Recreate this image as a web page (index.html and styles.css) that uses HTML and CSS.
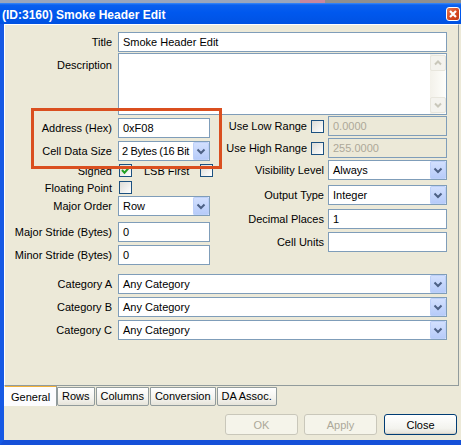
FILE: index.html
```html
<!DOCTYPE html>
<html>
<head>
<meta charset="utf-8">
<link rel="stylesheet" href="styles.css">
</head>
<body>
<div class="topstrip"><span class="strip-a"></span><span class="strip-pink"></span><span class="strip-b"></span></div>
<div class="titlebar">
  <span class="title">(ID:3160) Smoke Header Edit</span>
  <span class="close"><svg width="12" height="12" viewBox="0 0 12 12"><path d="M3 3 L9 9 M9 3 L3 9" stroke="#fff" stroke-width="2.2" fill="none"/></svg></span>
</div>
<div class="frame">
  <div class="panel">
    <div class="row">
      <span class="lbl">Title</span>
      <div class="input">Smoke Header Edit</div>
    </div>
    <div class="row row-desc">
      <span class="lbl lbl-top">Description</span>
      <div class="textarea">
        <div class="ta-text"></div>
        <div class="vscroll">
          <div class="sbtn"><svg width="14" height="14" viewBox="0 0 14 14"><path d="M4 8.5 L7 5.5 L10 8.5" stroke="#C9C7BA" stroke-width="2" fill="none"/></svg></div>
          <div class="strack"></div>
          <div class="sbtn"><svg width="14" height="14" viewBox="0 0 14 14"><path d="M4 5.5 L7 8.5 L10 5.5" stroke="#C9C7BA" stroke-width="2" fill="none"/></svg></div>
        </div>
      </div>
    </div>

    <div class="mid">
      <div class="col-left">
        <div class="lrow m-addr">
          <span class="lbl">Address (Hex)</span>
          <div class="input">0xF08</div>
        </div>
        <div class="lrow m-cell">
          <span class="lbl">Cell Data Size</span>
          <div class="select"><span class="val val-tight">2 Bytes (16 Bit</span><span class="dd"><svg width="16" height="18" viewBox="0 0 16 18"><path d="M4.5 7.5 L8 11 L11.5 7.5" fill="none" stroke="#4D6185" stroke-width="2"/></svg></span></div>
        </div>
        <div class="lrow crow m-signed">
          <span class="lbl">Signed</span>
          <div class="checks">
            <span class="cb"><svg width="11" height="11" viewBox="0 0 11 11"><path d="M2 5 L4.5 7.8 L9 2.5" stroke="#21A121" stroke-width="2" fill="none"/></svg></span>
            <span class="cb-lbl">LSB First</span>
            <span class="cb"></span>
          </div>
        </div>
        <div class="lrow crow m-float">
          <span class="lbl">Floating Point</span>
          <div class="checks"><span class="cb"></span></div>
        </div>
        <div class="lrow m-order">
          <span class="lbl">Major Order</span>
          <div class="select"><span class="val">Row</span><span class="dd"><svg width="16" height="18" viewBox="0 0 16 18"><path d="M4.5 7.5 L8 11 L11.5 7.5" fill="none" stroke="#4D6185" stroke-width="2"/></svg></span></div>
        </div>
        <div class="lrow m-major">
          <span class="lbl">Major Stride (Bytes)</span>
          <div class="input">0</div>
        </div>
        <div class="lrow m-minor">
          <span class="lbl">Minor Stride (Bytes)</span>
          <div class="input">0</div>
        </div>
      </div>

      <div class="col-right">
        <div class="rrow m-low">
          <span class="lbl lbl-cb">Use Low Range <span class="cb"></span></span>
          <div class="input disabled">0.0000</div>
        </div>
        <div class="rrow m-high">
          <span class="lbl lbl-cb">Use High Range <span class="cb"></span></span>
          <div class="input disabled">255.0000</div>
        </div>
        <div class="rrow m-vis">
          <span class="lbl">Visibility Level</span>
          <div class="select"><span class="val">Always</span><span class="dd"><svg width="16" height="18" viewBox="0 0 16 18"><path d="M4.5 7.5 L8 11 L11.5 7.5" fill="none" stroke="#4D6185" stroke-width="2"/></svg></span></div>
        </div>
        <div class="rrow m-out">
          <span class="lbl">Output Type</span>
          <div class="select"><span class="val">Integer</span><span class="dd"><svg width="16" height="18" viewBox="0 0 16 18"><path d="M4.5 7.5 L8 11 L11.5 7.5" fill="none" stroke="#4D6185" stroke-width="2"/></svg></span></div>
        </div>
        <div class="rrow m-dec">
          <span class="lbl">Decimal Places</span>
          <div class="input">1</div>
        </div>
        <div class="rrow m-units">
          <span class="lbl">Cell Units</span>
          <div class="input"></div>
        </div>
      </div>
    </div>

    <div class="row m-cat-a">
      <span class="lbl">Category A</span>
      <div class="select"><span class="val">Any Category</span><span class="dd"><svg width="16" height="18" viewBox="0 0 16 18"><path d="M4.5 7.5 L8 11 L11.5 7.5" fill="none" stroke="#4D6185" stroke-width="2"/></svg></span></div>
    </div>
    <div class="row m-cat">
      <span class="lbl">Category B</span>
      <div class="select"><span class="val">Any Category</span><span class="dd"><svg width="16" height="18" viewBox="0 0 16 18"><path d="M4.5 7.5 L8 11 L11.5 7.5" fill="none" stroke="#4D6185" stroke-width="2"/></svg></span></div>
    </div>
    <div class="row m-cat">
      <span class="lbl">Category C</span>
      <div class="select"><span class="val">Any Category</span><span class="dd"><svg width="16" height="18" viewBox="0 0 16 18"><path d="M4.5 7.5 L8 11 L11.5 7.5" fill="none" stroke="#4D6185" stroke-width="2"/></svg></span></div>
    </div>

    <div class="highlight"></div>
  </div>

  <div class="tabs">
    <span class="tab tab-active">General</span>
    <span class="tab">Rows</span>
    <span class="tab">Columns</span>
    <span class="tab">Conversion</span>
    <span class="tab">DA Assoc.</span>
  </div>

  <div class="buttons">
    <span class="btn btn-disabled">OK</span>
    <span class="btn btn-disabled btn-apply">Apply</span>
    <span class="btn btn-default">Close</span>
  </div>
</div>
</body>
</html>
```

FILE: styles.css
```css
* { box-sizing: border-box; }

body {
  margin: 0;
  width: 461px;
  height: 445px;
  overflow: hidden;
  background: #ECE9D8;
  font-family: "Liberation Sans", Arial, sans-serif;
  font-size: 11px;
  color: #000;
}

.topstrip {
  display: flex;
  height: 3px;
}
.strip-a { width: 300px; background: #9AA6BC; }
.strip-pink { width: 25px; background: #C8879E; }
.strip-b { flex: 1; background: #8F8F8F; }

.titlebar {
  height: 21px;
  display: flex;
  align-items: flex-start;
  background: linear-gradient(#3C8CF8 0, #0B60EE 2px, #0058EE 45%, #0052E2 100%);
  color: #fff;
  padding-left: 2px;
}
.title {
  font-weight: bold;
  font-size: 12px;
  line-height: 14px;
  margin-top: 5px;
  white-space: nowrap;
}
.close {
  margin-left: auto;
  margin-right: 1px;
  margin-top: 4px;
  width: 14px;
  height: 14px;
  border: 1px solid #fff;
  border-radius: 3px;
  background: linear-gradient(135deg, #E8794F, #D4461F 60%, #C23A18);
  display: flex;
  align-items: center;
  justify-content: center;
}

.frame {
  height: 421px;
  border-left: 4px solid #1659E4;
  border-bottom: 5px solid #1550D8;
  background: #ECE9D8;
}

.panel {
  position: relative;
  width: 455px;
  height: 362px;
  border-top: 1px solid #FFFFFF;
  border-left: 1px solid #FFFFFF;
  border-right: 1px solid #919B9C;
  border-bottom: 1px solid #919B9C;
  padding: 7px 11px 0 0;
}

.lbl {
  text-align: right;
  white-space: nowrap;
}
.lbl-top {
  align-self: start;
  padding-top: 6px;
}

.row {
  display: grid;
  grid-template-columns: 107px 1fr;
  column-gap: 6px;
  align-items: center;
  height: 20px;
}
.row-desc {
  height: 62px;
  margin-top: 1px;
}

.input {
  height: 20px;
  border: 1px solid #7F9DB9;
  background: #fff;
  padding-left: 4px;
  line-height: 18px;
  white-space: nowrap;
  overflow: hidden;
}
.input.disabled {
  background: #ECE9D8;
  color: #ACA899;
}

.textarea {
  height: 62px;
  border: 1px solid #7F9DB9;
  background: #fff;
  display: flex;
}
.ta-text { flex: 1; }
.vscroll {
  width: 16px;
  display: flex;
  flex-direction: column;
  padding: 1px 0;
  background: linear-gradient(to right, #F3F1EA, #FEFEFB);
}
.sbtn {
  height: 16px;
  border: 1px solid #E8E6DD;
  border-radius: 2px;
  background: #F4F3EE;
  display: flex;
  align-items: center;
  justify-content: center;
}
.strack { flex: 1; }

.select {
  height: 20px;
  border: 1px solid #7F9DB9;
  background: #fff;
  display: flex;
  align-items: center;
  overflow: hidden;
}
.select .val {
  flex: 1;
  padding-left: 4px;
  white-space: nowrap;
  overflow: hidden;
}
.select .val-tight {
  letter-spacing: -0.3px;
  padding-left: 3px;
}
.dd {
  flex: none;
  width: 16px;
  height: 18px;
  border-radius: 2px;
  background: linear-gradient(#D4E1FE, #B5CAF9);
  box-shadow: inset 0 0 0 1px #BDD0F9;
  display: flex;
}

.mid {
  display: grid;
  grid-template-columns: 205px 233px;
  column-gap: 4px;
  align-items: start;
  height: 150px;
}

.lrow {
  display: grid;
  grid-template-columns: 107px 92px;
  column-gap: 6px;
  align-items: center;
  height: 20px;
}
.crow { height: 13px; }

.rrow {
  display: grid;
  grid-template-columns: 110px 119px;
  column-gap: 4px;
  align-items: center;
  height: 20px;
}

.m-addr { margin-top: 3px; }
.m-cell { margin-top: 3px; }
.m-signed { margin-top: 3px; }
.m-float { margin-top: 4px; }
.m-order { margin-top: 2px; }
.m-major { margin-top: 6px; }
.m-minor { margin-top: 3px; }

.m-low { margin-top: 1px; }
.m-high { margin-top: 2px; }
.m-vis { margin-top: 2px; }
.m-out { margin-top: 5px; }
.m-dec { margin-top: 4px; }
.m-units { margin-top: 3px; }

.m-cat-a { margin-top: 9px; }
.m-cat { margin-top: 3px; }

.checks {
  display: flex;
  align-items: center;
  padding-left: 1px;
}
.cb {
  flex: none;
  display: inline-flex;
  align-items: center;
  justify-content: center;
  width: 13px;
  height: 13px;
  border: 1px solid #1C5180;
  background: linear-gradient(135deg, #DCDCD7, #FFFFFF);
}
.cb-lbl {
  margin-left: 12px;
  margin-right: 11px;
  white-space: nowrap;
}
.lbl-cb {
  display: flex;
  justify-content: flex-end;
  align-items: center;
  gap: 4px;
}

.highlight {
  position: absolute;
  left: 26px;
  top: 83px;
  width: 191px;
  height: 61px;
  border: 3px solid #DA4F1F;
}

.tabs {
  display: flex;
  align-items: flex-start;
  margin-top: -1px;
  height: 21px;
}
.tab {
  height: 19px;
  margin-top: 2px;
  margin-right: 1px;
  padding: 0 4px;
  border: 1px solid #919B9C;
  border-radius: 0 0 2px 2px;
  background: linear-gradient(#FFFFFF, #F4F3EE 60%, #E6E4DA);
  line-height: 17px;
  white-space: nowrap;
}
.tab-active {
  width: 53px;
  height: 21px;
  margin-top: 0;
  margin-right: 0;
  padding: 0 0 0 6px;
  border: none;
  border-top: 2px solid #F2B13A;
  border-right: 1px solid #919B9C;
  border-left: 1px solid #FFFFFF;
  border-radius: 0;
  background: #FCFCFE;
  line-height: 20px;
}

.buttons {
  display: flex;
  justify-content: flex-end;
  gap: 6px;
  margin-top: 8px;
  padding-right: 4px;
}
.btn {
  width: 73px;
  height: 21px;
  border-radius: 3px;
  display: flex;
  align-items: center;
  justify-content: center;
}
.btn-apply { margin-right: 1px; }
.btn-disabled {
  border: 1px solid #C9C7BA;
  background: #F5F4EA;
  color: #ACA899;
}
.btn-default {
  border: 1px solid #003C74;
  background: linear-gradient(#FFFFFF, #F3F3EE 70%, #E3E1D8);
  box-shadow: inset 0 -1px 0 #D6D0C5;
}
```
